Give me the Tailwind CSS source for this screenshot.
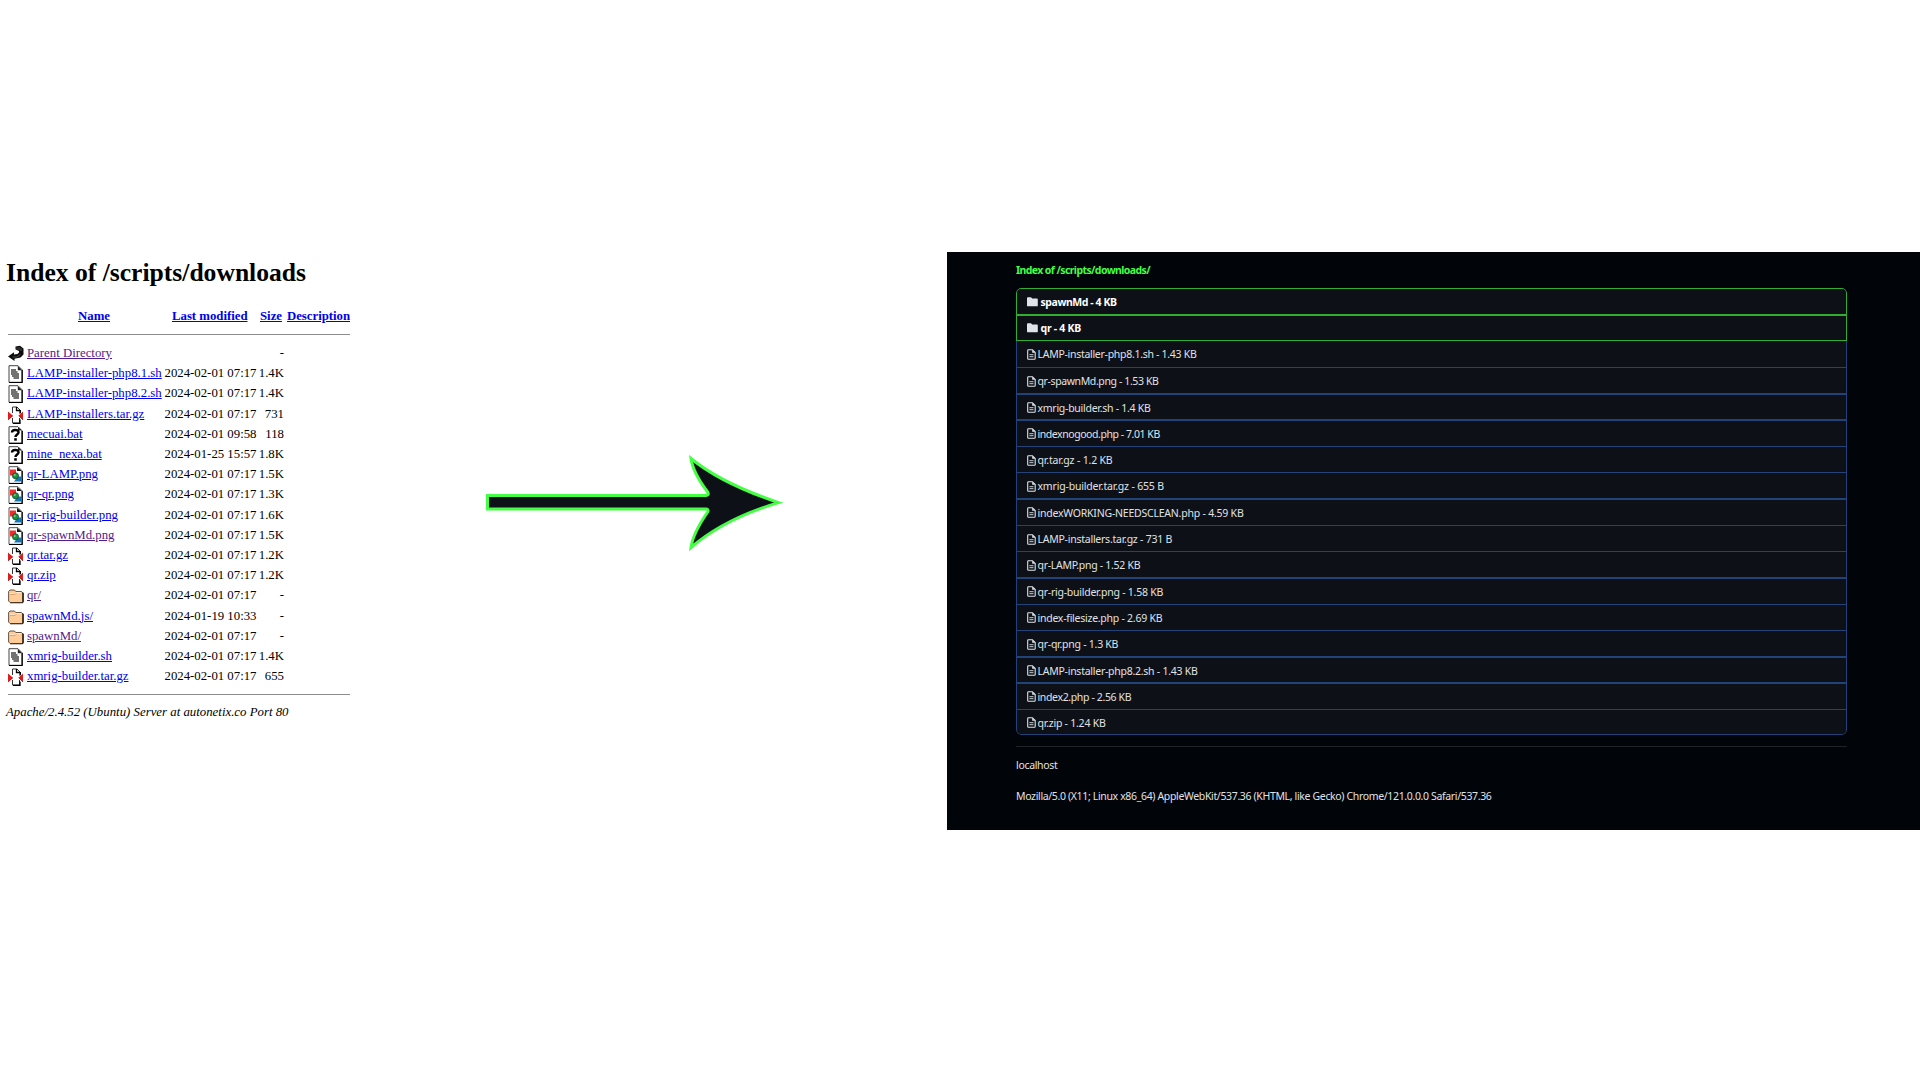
<!DOCTYPE html>
<html lang="en">
<head>
<meta charset="utf-8">
<title>Index of /scripts/downloads</title>
<script src="https://cdn.jsdelivr.net/npm/@tailwindcss/browser@4"></script>
</head>
<body class="bg-white w-[1920px] h-[1080px] overflow-hidden flex items-start">
<svg class="hidden">
  <symbol id="back" viewBox="0 0 16 18"><path d="M7.500 1.500L12 .8 15.500 3.500V9.500L12.500 12.500 6.500 13.700V16L0 11.500 6 7.200V9.500L9.500 9 11 7.500V6L7.500 4.500z" fill="#0c0c0c"/><path d="M9 2.500v2M11 2v3M13 3v3M4.500 12h4l4-2.500" stroke="#777" stroke-width=".6" fill="none"/></symbol>
  <symbol id="text" viewBox="0 0 16 18"><path d="M1 .7h9l4 4v12.600H1z" fill="#fff" stroke="#444" stroke-width="1"/><path d="M14.200 5v12.500H1" stroke="#000" stroke-width="1.200" fill="none"/><path d="M9.800 1v4.300H14z" fill="#222"/><path d="M3 5h5M3 7h6.500M3 9h8M4 11h7M5.500 13h5.500" stroke="#444" stroke-width="1.300"/></symbol>
  <symbol id="unknown" viewBox="0 0 16 18"><path d="M1 .7h9l4 4v12.600H1z" fill="#fff" stroke="#444" stroke-width="1"/><path d="M14.200 5v12.500H1" stroke="#000" stroke-width="1.300" fill="none"/><path d="M10 1v3.500h4z" fill="#222"/><path d="M4 6.500C4 3 10.800 3 10.500 6.500 10.300 8.500 7.500 8.500 7.500 11" stroke="#000" stroke-width="2.500" fill="none"/><path d="M6.200 12.200h2.600v2.500H6.200z"/></symbol>
  <symbol id="image" viewBox="0 0 16 18"><path d="M1 .7h9l4 4v12.600H1z" fill="#fff" stroke="#555" stroke-width="1"/><path d="M14.200 5v12.500H1" stroke="#000" stroke-width="1.200" fill="none"/><path d="M9 1v4h5z" fill="#111"/><path d="M2 3.500h6v6H2z" fill="#f22b2b"/><path d="M6 15.500l4-5 3.500 0v5z" fill="#1874b4"/><circle cx="7.500" cy="9.800" r="3.100" fill="#18913a" stroke="#143" stroke-width=".7"/><circle cx="6.800" cy="9" r=".9" fill="#7fd48e"/></symbol>
  <symbol id="zip" viewBox="0 0 16 18"><path d="M4.500 1h4.500l3 3v4M4.500 1v6M4.500 12v5h7v-5" fill="#fff" stroke="#333" stroke-width="1"/><path d="M8.500 1v3.500H12M12.300 4v3M5 17.400h7v-4" fill="none" stroke="#000" stroke-width="1.300"/><path d="M0 5.500l5 4.200-5 4.300z" fill="#e01b1b"/><path d="M15 5.500l-4.500 4.200L15 14z" fill="#e01b1b"/><path d="M0 14l5-4.300M15 14l-4-4.300" stroke="#600" stroke-width=".6"/></symbol>
  <symbol id="folder" viewBox="0 0 16 18"><path d="M2 16.300h12.500l1.300-1.300V6l-1.300-1z" fill="#111"/><path d="M.6 4.500L2 3h4.500l1.300 1.500h5.500l1.200 1v9.300l-.7.7H2L.6 14z" fill="#ffcc99" stroke="#3d2c1c" stroke-width=".8"/><path d="M1.500 6.500h5.500l1-1h5" fill="none" stroke="#fff0dd" stroke-width=".8"/><path d="M2 7.400h5.200l1-1" fill="none" stroke="#b88554" stroke-width=".6"/></symbol>
  <symbol id="dir" viewBox="0 0 11 10"><path d="M0 1Q0 .2.900.2H4L5.200 1.500H10Q10.800 1.500 10.800 2.400V8.400Q10.800 9.300 10 9.300H.900Q0 9.300 0 8.400z" fill="#dfe3ea"/></symbol>
  <symbol id="doc" viewBox="0 0 9 11"><path d="M1.400.7H5.400L8.200 3.500V9.400Q8.200 10.200 7.400 10.200H1.500Q.7 10.200.7 9.400V1.500Q.7.7 1.400.7z" fill="none" stroke="#dfe3ea" stroke-width="1.100"/><path d="M5.200.8V3.700H8z" fill="#dfe3ea"/><path d="M2.400 5.700h4.100M2.400 7.700h4.100" stroke="#dfe3ea" stroke-width=".9"/></symbol>
</svg>

<main class="w-[486px] shrink-0 pt-[257px] pl-[6px] font-['Liberation_Serif',serif] text-[12.8px] text-black">
  <h1 class="font-bold text-[25.6px] leading-8 whitespace-nowrap"><span data-f="bold 25.6px 'Liberation Serif'" data-w="300">Index of /scripts/downloads</span></h1>
  <div class="ml-[2px] w-[342px]">
    <div class="mt-[19px] h-4 flex font-bold leading-4 text-[#0000ee] whitespace-nowrap">
      <span class="w-[156px] pl-[70px]"><a class="underline" data-f="bold 12.8px 'Liberation Serif'" data-w="32">Name</a></span>
      <span class="w-[96px] pl-[8px]"><a class="underline" data-f="bold 12.8px 'Liberation Serif'" data-w="75.5">Last modified</a></span>
      <span class="w-[27px]"><a class="underline" data-f="bold 12.8px 'Liberation Serif'" data-w="22">Size</a></span>
      <a class="underline" data-f="bold 12.8px 'Liberation Serif'" data-w="63">Description</a>
    </div>
    <hr class="mt-[10px] border-t border-[#8c8c8c]">
    <div id="files" class="mt-[8px]"></div>
    <hr class="mt-[8px] border-t border-[#8c8c8c]">
  </div>
  <address class="mt-[9px] leading-4 italic whitespace-nowrap"><span data-f="italic 12.8px 'Liberation Serif'" data-w="282.5">Apache/2.4.52 (Ubuntu) Server at autonetix.co Port 80</span></address>
</main>

<div class="w-[461px] shrink-0 pt-[453px]">
  <svg class="w-[300px] h-[100px] block" viewBox="486 453 300 100"><path d="M487.500 495.500H706Q709 495.500 708 492.500C700 482 692.500 470 691 458.500C716 479 747 492 778.500 502.600C747 512 716 526 691 547.500C692.500 536 700 523 708 511.500Q708.500 509 706 509H487.500z" fill="#0d1117" stroke="#44ff44" stroke-width="3" stroke-miterlimit="10"/></svg>
</div>

<section class="mt-[252px] w-[973px] h-[578px] shrink-0 bg-[#010409] pl-[69px] pt-[10px] font-['Noto_Sans',sans-serif] text-[10.5px] text-[#e0e2e6]">
  <h2 class="h-[26px] leading-4 font-bold text-[#44ff44] whitespace-nowrap"><span data-f="bold 10.5px 'Noto Sans'" data-w="134">Index of /scripts/downloads/</span></h2>
  <div id="list" class="w-[831px] rounded-[5px] overflow-hidden"></div>
  <hr class="mt-[11px] w-[831px] border-t border-[#20242a]">
  <p class="mt-[10px] leading-4 whitespace-nowrap"><span data-f="10.5px 'Noto Sans'" data-w="41.5">localhost</span></p>
  <p class="mt-[15px] leading-4 whitespace-nowrap"><span data-f="10.5px 'Noto Sans'" data-w="475.5">Mozilla/5.0 (X11; Linux x86_64) AppleWebKit/537.36 (KHTML, like Gecko) Chrome/121.0.0.0 Safari/537.36</span></p>
</section>

<script>
const files = [
  ['back','Parent Directory','','-',85,1],
  ['text','LAMP-installer-php8.1.sh','2024-02-01 07:17','1.4K',134.7],
  ['text','LAMP-installer-php8.2.sh','2024-02-01 07:17','1.4K',134.7],
  ['zip','LAMP-installers.tar.gz','2024-02-01 07:17','731',117.3],
  ['unknown','mecuai.bat','2024-02-01 09:58','118',55.5],
  ['unknown','mine_nexa.bat','2024-01-25 15:57','1.8K',74.7],
  ['image','qr-LAMP.png','2024-02-01 07:17','1.5K',71],
  ['image','qr-qr.png','2024-02-01 07:17','1.3K',47],
  ['image','qr-rig-builder.png','2024-02-01 07:17','1.6K',91],
  ['image','qr-spawnMd.png','2024-02-01 07:17','1.5K',87.5,1],
  ['zip','qr.tar.gz','2024-02-01 07:17','1.2K',41],
  ['zip','qr.zip','2024-02-01 07:17','1.2K',28.7],
  ['folder','qr/','2024-02-01 07:17','-',14,1],
  ['folder','spawnMd.js/','2024-01-19 10:33','-',66],
  ['folder','spawnMd/','2024-02-01 07:17','-',54,1],
  ['text','xmrig-builder.sh','2024-02-01 07:17','1.4K',85],
  ['zip','xmrig-builder.tar.gz','2024-02-01 07:17','655',101.5],
];
document.getElementById('files').innerHTML = files.map(([icon, name, date, size, w, seen]) => `
  <div class="flex items-center h-[20.2px] leading-4 whitespace-nowrap">
    <svg class="w-4 h-[18px] mr-[3px] mt-[2px] shrink-0"><use href="#${icon}"/></svg>
    <span class="w-[137.5px] shrink-0"><a class="underline ${seen ? 'text-[#551a8b]' : 'text-[#0000ee]'}" data-f="12.8px 'Liberation Serif'" data-w="${w}">${name}</a></span>
    <span class="w-[92px] shrink-0">${date ? `<span data-f="12.8px 'Liberation Serif'" data-w="92">${date}</span>` : ''}</span>
    <span class="w-[27.5px] shrink-0 text-right">${size}</span>
  </div>`).join('');

const entries = [
  ['spawnMd - 4 KB',76,1],['qr - 4 KB',40.5,1],
  ['LAMP-installer-php8.1.sh - 1.43 KB',159],['qr-spawnMd.png - 1.53 KB',121],
  ['xmrig-builder.sh - 1.4 KB',113],['indexnogood.php - 7.01 KB',122.3],
  ['qr.tar.gz - 1.2 KB',75],['xmrig-builder.tar.gz - 655 B',126.3],
  ['indexWORKING-NEEDSCLEAN.php - 4.59 KB',206],['LAMP-installers.tar.gz - 731 B',134.5],
  ['qr-LAMP.png - 1.52 KB',102.7],['qr-rig-builder.png - 1.58 KB',125.5],
  ['index-filesize.php - 2.69 KB',124.7],['qr-qr.png - 1.3 KB',80.7],
  ['LAMP-installer-php8.2.sh - 1.43 KB',160],['index2.php - 2.56 KB',93.7],['qr.zip - 1.24 KB',68],
];
document.getElementById('list').innerHTML = entries.map(([label, w, dir], i) => `
  <div class="h-[26.31px] px-px ${i === 0 ? 'pt-px rounded-t-[5px]' : i === 1 ? 'pt-[1.5px] pb-px' : i === 2 ? '' : 'pt-[1.4px]'} ${i === 16 ? 'pb-[1.2px] rounded-b-[5px]' : ''} ${dir ? 'bg-[#2fae33]' : 'bg-[#22437a]'}">
    <div class="h-full bg-[#0d1117] pl-[9.5px] pt-px flex items-center leading-4 whitespace-nowrap ${i === 0 ? 'rounded-t-[4px]' : ''} ${i === 16 ? 'rounded-b-[4px]' : ''} ${dir ? 'font-bold text-white' : ''}">
      ${dir ? '<svg class="w-[11px] h-[10px] mr-[3px]"><use href="#dir"/></svg>' : '<svg class="w-[9px] h-[11px] mr-[2px]"><use href="#doc"/></svg>'}
      <span data-f="${dir ? 'bold ' : ''}10.5px 'Noto Sans'" data-w="${w}">${label}</span>
    </div>
  </div>`).join('');

const ctx = document.createElement('canvas').getContext('2d');
document.querySelectorAll('[data-w]').forEach(el => {
  ctx.font = el.dataset.f;
  const gap = (el.dataset.w - ctx.measureText(el.textContent).width) / el.textContent.length;
  el.style.letterSpacing = gap.toFixed(3) + 'px';
});
</script>
</body>
</html>
